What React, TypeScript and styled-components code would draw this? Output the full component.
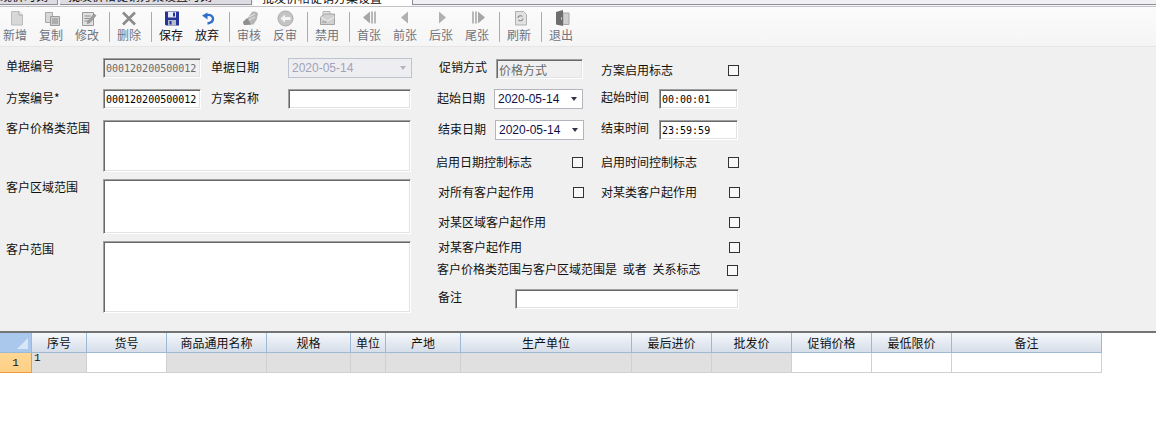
import React from "react";
import styled, { createGlobalStyle } from "styled-components";

const Global = createGlobalStyle`
  html, body { margin: 0; padding: 0; background: #fff; }
  * { box-sizing: border-box; }
  #root { width: 1156px; height: 447px; overflow: hidden; font-family: "Noto Sans CJK SC", "Liberation Sans", sans-serif; font-size: 12px; color: #111; }
`;

const TabStrip = styled.div`
  display: flex;
  height: 7px;
  overflow: hidden;
  background: #f4f4f6;
  padding-bottom: 1px;
  border-bottom: 1px solid #c4c4c8;
`;
const Tab = styled.div<{ $w: number; $pad: number; $active?: boolean }>`
  width: ${(p) => p.$w}px;
  height: ${(p) => (p.$active ? 7 : 5)}px;
  flex: none;
  overflow: hidden;
  padding-left: ${(p) => p.$pad}px;
  background: ${(p) => (p.$active ? "#fff" : "#dcdce2")};
  border-right: ${(p) => (p.$active ? "0" : "1px solid #8e8e96")};
  border-bottom: ${(p) => (p.$active ? "0" : "1px solid #8e8e96")};
  margin-right: ${(p) => (p.$active ? 0 : 2)}px;
  white-space: nowrap;
  z-index: 1;
`;
const TabText = styled.span<{ $top: number }>`
  display: block;
  line-height: 16px;
  margin-top: ${(p) => p.$top}px;
`;
const TabRest = styled.div`
  flex: 1;
  height: 5px;
  background: #f0f0f3;
  border-left: 1px solid #8e8e96;
  border-bottom: 1px solid #8e8e96;
`;

const Toolbar = styled.div`
  display: flex;
  height: 40px;
  margin-left: -3px;
  padding-top: 3px;
  background: linear-gradient(#fbfbfb, #f5f5f5);
  border-bottom: 1px solid #e6e6e6;
`;
const ToolItem = styled.div<{ $on?: boolean }>`
  width: 36px;
  flex: none;
  display: flex;
  flex-direction: column;
  align-items: center;
  color: ${(p) => (p.$on ? "#101018" : "#6f7480")};
  line-height: 16px;
  svg { display: block; height: 17px; }
`;
const ToolSep = styled.div`
  width: 6px;
  flex: none;
  padding-left: 4px;
  padding-top: 2px;
  &::before { content: ""; display: block; width: 1px; height: 30px; background: #ababab; }
`;

const Form = styled.div`
  display: flex;
  height: 284px;
  background: #f0f0f0;
  padding: 11px 0 0 6px;
`;
const LeftCol = styled.div`
  width: 430px;
  flex: none;
`;
const RightCol = styled.div`
  flex: 1;
`;
const Row = styled.div<{ $mt?: number; $h?: number }>`
  display: flex;
  align-items: flex-start;
  margin-top: ${(p) => p.$mt ?? 0}px;
  height: ${(p) => p.$h ?? 20}px;
`;
const Label = styled.span<{ $w: number; $dy?: number; $ml?: number; $ws?: number }>`
  flex: none;
  display: block;
  width: ${(p) => p.$w}px;
  height: 16px;
  line-height: 16px;
  margin-top: ${(p) => p.$dy ?? 0}px;
  margin-left: ${(p) => p.$ml ?? 0}px;
  word-spacing: ${(p) => p.$ws ?? 0}px;
  color: #111;
  white-space: nowrap;
`;
const sunken = `
  border: 1px solid;
  border-color: #a0a0a0 #ffffff #ffffff #a0a0a0;
  box-shadow: inset 1px 1px 0 #696969, inset -1px -1px 0 #e3e3e3;
  outline: none;
`;
const TextInput = styled.input<{ $w: number; $gray?: boolean; $cjk?: boolean }>`
  ${sunken}
  flex: none;
  width: ${(p) => p.$w}px;
  height: 20px;
  padding: 0 2px;
  background: ${(p) => (p.$gray ? "#f0f0f0" : "#fff")};
  color: ${(p) => (p.$gray ? "#6a6a6a" : "#000")};
  font-family: ${(p) => (p.$cjk ? `"Noto Sans CJK SC", sans-serif` : `"DejaVu Sans Mono", monospace`)};
  font-size: ${(p) => (p.$cjk ? 12 : 10)}px;
`;
const TextArea = styled.textarea<{ $h: number }>`
  ${sunken}
  display: block;
  flex: none;
  width: 308px;
  height: ${(p) => p.$h}px;
  resize: none;
  background: #fff;
  padding: 2px;
  overflow: hidden;
`;
const DateSelect = styled.div<{ $w: number; $off?: boolean }>`
  flex: none;
  display: flex;
  align-items: center;
  justify-content: space-between;
  width: ${(p) => p.$w}px;
  height: 20px;
  padding: 0 5px 0 3px;
  border: 1px solid ${(p) => (p.$off ? "#bcc4d0" : "#b4b4bc")};
  background: ${(p) => (p.$off ? "#eeeef2" : "#fff")};
  color: ${(p) => (p.$off ? "#a2a2b8" : "#10104a")};
  font-family: "Liberation Sans", sans-serif;
  font-size: 12px;
  &::after {
    content: "";
    width: 0;
    height: 0;
    margin-top: -1px;
    border-left: 3.5px solid transparent;
    border-right: 3.5px solid transparent;
    border-top: 4px solid ${(p) => (p.$off ? "#b4b4bc" : "#33334a")};
  }
`;
const Check = styled.span<{ $dy: number; $ml?: number }>`
  display: block;
  flex: none;
  width: 11px;
  height: 11px;
  margin-top: ${(p) => p.$dy}px;
  margin-left: ${(p) => p.$ml ?? 0}px;
  border: 1px solid #333;
  background: #f8f8f8;
`;

const COLS = "32px 55px 80px 100px 84px 35px 75px 171px 80px 80px 80px 80px 150px";
const Grid = styled.div`
  border-top: 2px solid #747474;
  display: grid;
  grid-template-columns: ${COLS};
  grid-auto-rows: 20px;
`;
const Corner = styled.div`
  position: relative;
  background: #a9c8ec;
  border-right: 1px solid #9db9d4;
  border-bottom: 1px solid #9db9d4;
  &::after {
    content: "";
    position: absolute;
    right: 3px;
    bottom: 3px;
    border-left: 11px solid transparent;
    border-bottom: 11px solid #d8e6f6;
  }
`;
const HeadCell = styled.div`
  display: flex;
  align-items: center;
  justify-content: center;
  background: linear-gradient(#f5f7fb, #d5dee9);
  border-right: 1px solid #9db9d4;
  border-bottom: 1px solid #9db9d4;
  color: #111;
  line-height: 16px;
`;
const RowHead = styled.div`
  display: flex;
  align-items: flex-end;
  justify-content: center;
  background: linear-gradient(#ffd693, #fdd086);
  border-right: 1px solid #ef9a3c;
  border-bottom: 1px solid #ef9a3c;
  font-family: "Liberation Mono", monospace;
  font-size: 11px;
  line-height: 17px;
`;
const Cell = styled.div<{ $off?: boolean }>`
  background: ${(p) => (p.$off ? "#e0e0e0" : "#fff")};
  border-right: 1px solid #d0d0d0;
  border-bottom: 1px solid #d0d0d0;
  padding: 0 0 0 2px;
  font-family: "Liberation Mono", monospace;
  font-size: 11px;
  line-height: 11px;
`;

const Ic = ({ children }: { children: React.ReactNode }) => (
  <svg width="20" height="17" viewBox="0 0 20 17">{children}</svg>
);
const G = "#b4b4b4";
const L = "#d8d8d8";

const icons: Record<string, React.ReactNode> = {
  new: (<Ic><path d="M6.5 1.5h7.5l3.5 3.5v10h-11z" fill={L} stroke="#bdbdbd" /><path d="M14 1.5v3.5h3.5" fill="#f2f2f2" stroke="#a8a8a8" /></Ic>),
  copy: (<Ic><path d="M4.5 2.5h7v10h-7z" fill={L} stroke="#a8a8a8" /><path d="M9.5 6.5h9v9h-9z" fill="#cfcfcf" stroke="#9c9c9c" /><path d="M11 9h6M11 11h6M11 13h6" stroke="#8c8c8c" /></Ic>),
  edit: (<Ic><path d="M5.5 2.5h11v13h-11z" fill="#e0e0e0" stroke="#9a9a9a" /><path d="M7.5 6h6M7.5 8.5h5M7.5 11h4" stroke="#8c8c8c" /><path d="M11 11l6-7 2 1.6-6 7-2.6 1z" fill="#a0a0a0" stroke="#7c7c7c" strokeWidth=".6" /></Ic>),
  del: (<Ic><path d="M4 2.5l12 12M16 2.5l-12 12" stroke="#8b8b8b" strokeWidth="2.6" /></Ic>),
  save: (<Ic><path d="M4 1.5h14v14h-13l-1-1z" fill="#28339a" /><path d="M7 2h8v5.5h-8z" fill="#e6e9f8" /><path d="M12 2.6h2v4h-2z" fill="#28339a" /><path d="M7 10h8v5.5h-8z" fill="#b6bcc8" /><path d="M8.5 11h2v3.5h-2z" fill="#28339a" /></Ic>),
  undo: (<Ic><path d="M9 5.5c4-1.6 7 .4 7 3.3 0 2.6-2.4 4.2-5.5 4.7" fill="none" stroke="#2f6fca" strokeWidth="2.4" /><path d="M5 5.5l5.5-3v7z" fill="#2f6fca" /></Ic>),
  audit: (<Ic><path d="M8 9l5-7c2-1 6 0 6 2l-1.500 6-3 4.500-9.500.5-1-3z" fill="#b6b6b6" /><path d="M10 7l6-3M10 10l6-3" stroke="#e8e8e8" /><path d="M4 12l4-4 4 6.500-7 .5z" fill="#8e8e8e" /></Ic>),
  unaudit: (<Ic><circle cx="10.500" cy="8.500" r="7.500" fill="#c4c4c4" stroke="#acacac" /><path d="M5.500 8.500l4.500-4v2.500h5.500v3h-5.500v2.500z" fill="#f4f4f4" /></Ic>),
  ban: (<Ic><path d="M6 1.500h7v6h-7z" fill="#e4e4e4" stroke={G} /><path d="M3.500 7l4-3h10v10.500h-14z" fill="#d0d0d0" stroke="#a4a4a4" /><path d="M3.500 7l7 4 7-4" fill="none" stroke="#f0f0f0" /><path d="M5.500 12h4" stroke="#8e8e8e" /></Ic>),
  first: (<Ic><path d="M11 1.500v12l-7-6z" fill="#a6a6a6" /><path d="M12 1.500h2v12h-2zM15 1.500h2v12h-2z" fill="#b8b8b8" /></Ic>),
  prev: (<Ic><path d="M13 1.500v12l-7-6z" fill="#b0b0b0" /></Ic>),
  next: (<Ic><path d="M8 1.500v12l7-6z" fill="#b0b0b0" /></Ic>),
  last: (<Ic><path d="M11 1.500v12l7-6z" fill="#a6a6a6" /><path d="M5 1.500h2v12h-2zM8 1.500h2v12h-2z" fill="#b8b8b8" /></Ic>),
  refresh: (<Ic><path d="M6.500 1.500h8l3 3v10.500h-11z" fill="#e2e2e2" stroke="#b0b0b0" /><path d="M9 8c0-2 3-3 4.500-1.500M14 8.500c0 2-3 3-4.500 1.500" fill="none" stroke="#8c8c8c" strokeWidth="1.200" /></Ic>),
  exit: (<Ic><path d="M12 3h6v11.500h-6z" fill="#d0d0d0" stroke="#a8a8a8" /><path d="M5 2l7-2v16l-7-1.500z" fill="#6e6e6e" /><path d="M10 7.500h1v2h-1z" fill="#d8d8d8" /></Ic>),
};

type Tool = { k: string; t: string; on?: boolean } | "sep";
const tools: Tool[] = [
  { k: "new", t: "新增" }, { k: "copy", t: "复制" }, { k: "edit", t: "修改" }, "sep",
  { k: "del", t: "删除" }, "sep",
  { k: "save", t: "保存", on: true }, { k: "undo", t: "放弃", on: true }, "sep",
  { k: "audit", t: "审核" }, { k: "unaudit", t: "反审" }, "sep",
  { k: "ban", t: "禁用" }, "sep",
  { k: "first", t: "首张" }, { k: "prev", t: "前张" }, { k: "next", t: "后张" }, { k: "last", t: "尾张" }, "sep",
  { k: "refresh", t: "刷新" }, "sep",
  { k: "exit", t: "退出" },
];

const heads: [string, boolean][] = [
  ["序号", true], ["货号", false], ["商品通用名称", true], ["规格", true], ["单位", true], ["产地", true],
  ["生产单位", true], ["最后进价", true], ["批发价", true], ["促销价格", false], ["最低限价", false], ["备注", false],
];

export default function App() {
  return (
    <>
      <Global />
      <TabStrip>
        <Tab $w={58} $pad={0}><TabText $top={-12}>现价时刻</TabText></Tab>
        <Tab $w={192} $pad={8}><TabText $top={-12}>批发价格促销方案设置时刻</TabText></Tab>
        <Tab $w={158} $pad={8} $active><TabText $top={-10}>批发价格促销方案设置</TabText></Tab>
        <TabRest />
      </TabStrip>
      <Toolbar>
        {tools.map((x, i) =>
          x === "sep" ? (
            <ToolSep key={i} />
          ) : (
            <ToolItem key={i} $on={x.on}>
              {icons[x.k]}
              <span>{x.t}</span>
            </ToolItem>
          )
        )}
      </Toolbar>
      <Form>
        <LeftCol>
          <Row>
            <Label $w={97}>单据编号</Label>
            <TextInput $w={98} $gray readOnly value="000120200500012" />
            <Label $w={77} $ml={10} $dy={1}>单据日期</Label>
            <DateSelect $w={124} $off>2020-05-14</DateSelect>
          </Row>
          <Row $mt={11}>
            <Label $w={97} $dy={1}>方案编号*</Label>
            <TextInput $w={98} readOnly value="000120200500012" />
            <Label $w={77} $ml={10} $dy={1}>方案名称</Label>
            <TextInput $w={123} readOnly value="" />
          </Row>
          <Row $mt={11} $h={52}>
            <Label $w={97}>客户价格类范围</Label>
            <TextArea $h={52} readOnly />
          </Row>
          <Row $mt={7} $h={55}>
            <Label $w={97}>客户区域范围</Label>
            <TextArea $h={55} readOnly />
          </Row>
          <Row $mt={7} $h={72}>
            <Label $w={97}>客户范围</Label>
            <TextArea $h={72} readOnly />
          </Row>
        </LeftCol>
        <RightCol>
          <Row $mt={1}>
            <Label $w={57} $ml={3}>促销方式</Label>
            <TextInput $w={87} $gray $cjk readOnly value="价格方式" />
            <Label $w={127} $ml={18} $dy={3}>方案启用标志</Label>
            <Check $dy={6} />
          </Row>
          <Row $mt={10}>
            <Label $w={57} $ml={1} $dy={1}>起始日期</Label>
            <DateSelect $w={89}>2020-05-14</DateSelect>
            <Label $w={58} $ml={18}>起始时间</Label>
            <TextInput $w={79} readOnly value="00:00:01" />
          </Row>
          <Row $mt={11}>
            <Label $w={57} $ml={2} $dy={1}>结束日期</Label>
            <DateSelect $w={89}>2020-05-14</DateSelect>
            <Label $w={58} $ml={17}>结束时间</Label>
            <TextInput $w={79} readOnly value="23:59:59" />
          </Row>
          <Row $mt={14} $h={16}>
            <Label $w={136}>启用日期控制标志</Label>
            <Check $dy={3} />
            <Label $w={127} $ml={18}>启用时间控制标志</Label>
            <Check $dy={3} />
          </Row>
          <Row $mt={14} $h={16}>
            <Label $w={135} $ml={2}>对所有客户起作用</Label>
            <Check $dy={3} />
            <Label $w={128} $ml={17}>对某类客户起作用</Label>
            <Check $dy={3} />
          </Row>
          <Row $mt={14} $h={16}>
            <Label $w={291} $ml={2}>对某区域客户起作用</Label>
            <Check $dy={3} />
          </Row>
          <Row $mt={9} $h={16}>
            <Label $w={291} $ml={2}>对某客户起作用</Label>
            <Check $dy={3} />
          </Row>
          <Row $mt={6} $h={16}>
            <Label $w={290} $ml={1} $ws={3}>客户价格类范围与客户区域范围是 或者 关系标志</Label>
            <Check $dy={4} />
          </Row>
          <Row $mt={12}>
            <Label $w={77} $ml={2}>备注</Label>
            <TextInput $w={224} readOnly value="" />
          </Row>
        </RightCol>
      </Form>
      <Grid>
        <Corner />
        {heads.map(([h]) => (
          <HeadCell key={h}>{h}</HeadCell>
        ))}
        <RowHead>1</RowHead>
        {heads.map(([h, off], i) => (
          <Cell key={h} $off={off}>{i === 0 ? "1" : ""}</Cell>
        ))}
      </Grid>
    </>
  );
}
